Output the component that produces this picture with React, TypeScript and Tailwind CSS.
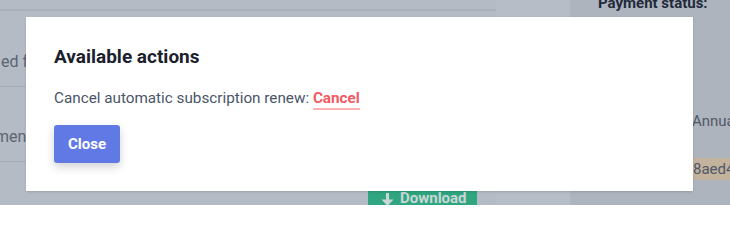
import React from "react";

const font = { fontFamily: "Roboto, 'Liberation Sans', sans-serif" };

const ArrowDown = () => (
  <svg width="13" height="14" viewBox="0 0 13 14" fill="currentColor">
    <rect x="5" y="0" width="3" height="8" />
    <path d="M0.5 6.5 L12.5 6.5 L6.5 13 Z" />
  </svg>
);

const App: React.FC = () => {
  return (
    <div
      style={font}
      className="relative w-[730px] h-[205px] overflow-hidden bg-[#b5bbc4]"
    >
      {/* page behind the overlay */}
      <div className="flex h-full">
        <section className="w-[496px] shrink-0 flex flex-col">
          <div className="h-[11px] border-b-2 border-[#abb1ba]"></div>
          <div className="h-[76px] border-b border-[#a6acb5] flex items-center pt-[26px] text-[16px] text-[#5c6472]">
            <span className="pl-[1px]">ed for 12 months</span>
          </div>
          <div className="h-[75px] border-b border-[#a6acb5] flex items-center pt-[26px] text-[16px] text-[#5c6472]">
            <span className="-ml-[5px]">ment method</span>
          </div>
          <div className="flex-1 flex items-end pl-[368px]">
            <div className="w-[109px] h-[14px] bg-[#2fa680] flex items-start gap-[6px] pl-[13px] text-[15px] leading-[14px] font-bold text-[#c9d6d6] overflow-hidden">
              <span className="pt-[2px]">
                <ArrowDown />
              </span>
              <span>Download</span>
            </div>
          </div>
        </section>
        <section className="w-[74px] shrink-0 bg-[#b7bdc6]"></section>
        <section className="flex-1 min-w-0 bg-[#aeb4bd] pl-[28px] flex flex-col whitespace-nowrap">
          <h3 className="-mt-[6px] text-[15px] font-bold leading-[18px] text-[#1f2a3b]">
            Payment status:
          </h3>
          <div className="mt-[99px] pl-[94px] text-[15px] text-[#4f5867] leading-[20px]">
            Annual
          </div>
          <div className="mt-[27px] h-[22px] bg-[#c2b29e] pl-[95px] text-[15px] leading-[22px] text-[#4f5867]">
            8aed41c9
          </div>
        </section>
      </div>

      {/* modal */}
      <div className="absolute left-[26px] top-[17px] w-[667px] h-[174px] bg-white shadow-sm px-7 pt-[26px]">
        <h2 className="text-[19px] leading-[28px] font-bold text-[#1a202c]">
          Available actions
        </h2>
        <p className="mt-[16px] text-[15.25px] leading-[22px] text-[#4a5568]">
          Cancel automatic subscription renew:{" "}
          <a className="font-bold text-[#f25a63] border-b-2 border-[#feb2b2] pb-[1px]">
            Cancel
          </a>
        </p>
        <div className="mt-[16px] flex">
          <button className="h-[38px] w-[66px] rounded-[3px] bg-[#6179e5] text-white text-[15px] font-bold shadow-[0_4px_10px_rgba(0,0,0,0.18)]">
            Close
          </button>
        </div>
      </div>
    </div>
  );
};

export default App;
